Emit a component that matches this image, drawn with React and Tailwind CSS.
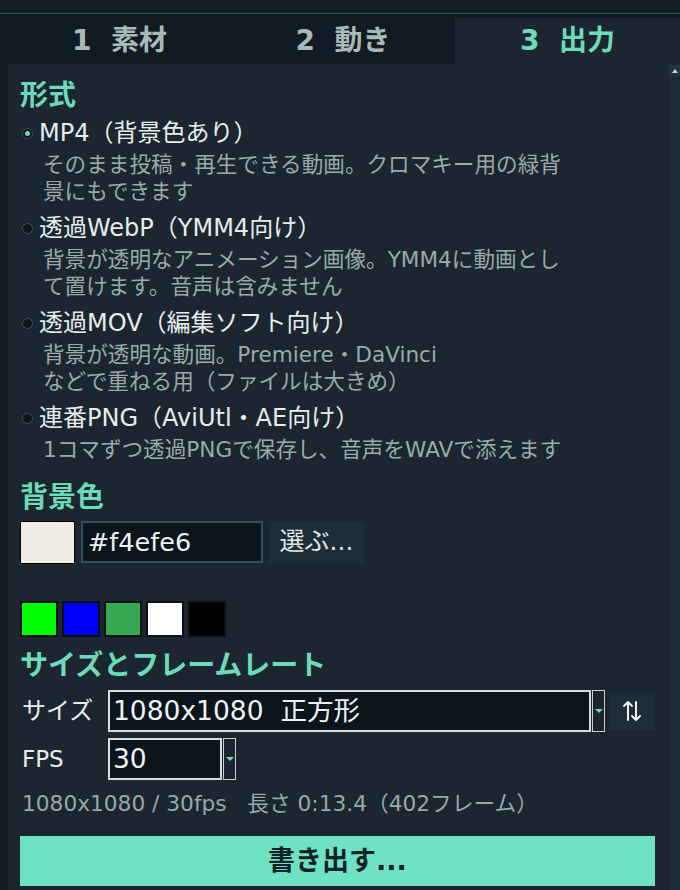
import React, { useState } from 'react';

const FONT = { fontFamily: '"DejaVu Sans", "Noto Sans CJK JP", sans-serif' };

const formats = [
  { id: 'mp4', label: 'MP4（背景色あり）', desc: ['そのまま投稿・再生できる動画。クロマキー用の緑背', '景にもできます'] },
  { id: 'webp', label: '透過WebP（YMM4向け）', desc: ['背景が透明なアニメーション画像。YMM4に動画とし', 'て置けます。音声は含みません'] },
  { id: 'mov', label: '透過MOV（編集ソフト向け）', desc: ['背景が透明な動画。Premiere・DaVinci', 'などで重ねる用（ファイルは大きめ）'] },
  { id: 'png', label: '連番PNG（AviUtl・AE向け）', desc: ['1コマずつ透過PNGで保存し、音声をWAVで添えます'] },
];

const palette = ['bg-[#00ff00]', 'bg-[#0000ff]', 'bg-[#34a853]', 'bg-[#ffffff]', 'bg-[#000000]'];

const Heading = ({ children, className = '' }) => (
  <h2 className={`text-[28px] leading-[36px] font-bold text-[#6ddbbb] ${className}`}>{children}</h2>
);

// tk風のコンボボックス（入力欄＋細い矢印ボタン）
const Combo = ({ value, width }) => (
  <div className="flex h-[42px]">
    <div className={`${width} h-full bg-[#0c141c] border-2 border-[#d5dcdc] flex items-center pl-[3px] text-[26.5px] text-[#eef3f3] whitespace-pre`}>
      {value}
    </div>
    <div className="w-[13px] h-full ml-[1px] border border-[#c8d0d0] bg-[#1b2631] flex items-center justify-center">
      <div className="w-0 h-0 border-l-[4px] border-r-[4px] border-t-[4px] border-l-transparent border-r-transparent border-t-[#6ddbbb]" />
    </div>
  </div>
);

const App = () => {
  const [tab, setTab] = useState(3);
  const [format, setFormat] = useState('mp4');
  const [bg, setBg] = useState('#f4efe6');

  const tabs = [
    { n: 1, label: '1  素材' },
    { n: 2, label: '2  動き' },
    { n: 3, label: '3  出力' },
  ];

  return (
    <div className="w-[680px] h-[890px] overflow-hidden bg-[#111b23] flex flex-col" style={FONT}>
      <div className="h-[13px] bg-[#141e27] shrink-0" />
      <div className="h-px bg-[#3b505a] shrink-0" />

      {/* タブ */}
      <div className="pt-[4px] pl-[8px] grid grid-cols-[223px_224px_225px] shrink-0">
        {tabs.map(t => (
          <button
            key={t.n}
            onClick={() => setTab(t.n)}
            className={`h-[46px] flex items-center justify-center text-[28px] font-bold whitespace-pre ${
              tab === t.n ? 'bg-[#1b2631] text-[#6ddbbb]' : 'text-[#a9b9b8]'
            }`}
          >
            {t.label}
          </button>
        ))}
      </div>

      <div className="flex flex-1 min-h-0">
        <div className="w-[8px] shrink-0" />

        {/* 出力パネル */}
        <div className="flex-1 bg-[#1b2631] pl-[12px] pr-[14px] pt-[14px] flex flex-col">
          <Heading>形式</Heading>

          <div className="mt-[4px] flex flex-col gap-[8px]">
            {formats.map(f => (
              <div key={f.id}>
                <label className="flex items-center h-[30px] cursor-pointer" onClick={() => setFormat(f.id)}>
                  <span className="ml-[2px] w-[11px] h-[11px] rounded-full bg-[#0c141c] border border-[#3c535b] flex items-center justify-center">
                    {format === f.id && <span className="w-[5px] h-[5px] rounded-full bg-[#6ddbbb]" />}
                  </span>
                  <span className="ml-[6px] text-[24px] text-[#e7eded] whitespace-nowrap">{f.label}</span>
                </label>
                <div className="mt-[3px] pl-[23px] text-[21.6px] leading-[27px] text-[#9aabaa] whitespace-nowrap">
                  {f.desc.map(line => (
                    <div key={line}>{line}</div>
                  ))}
                </div>
              </div>
            ))}
          </div>

          <Heading className="mt-[17px]">背景色</Heading>
          <div className="mt-[5px] flex items-center h-[42px]">
            <div className="w-[55px] h-[43px] border border-black" style={{ backgroundColor: '#f2ede6' }} />
            <div className="ml-[6px] w-[182px] h-[42px] bg-[#0c141c] border-2 border-[#36505a] flex items-center pl-[5px] text-[25.5px] text-[#eef3f3]">
              {bg}
            </div>
            <button className="ml-[6px] w-[95px] h-[41px] bg-[#1f2d38] text-[25px] text-[#e0e7e7] flex items-center justify-center">
              選ぶ...
            </button>
          </div>

          <div className="mt-[38px] flex gap-[4px]">
            {palette.map(c => (
              <button key={c} className={`w-[38px] h-[36px] border-2 border-[#0b0f12] ${c}`} onClick={() => setBg(bg)} />
            ))}
          </div>

          <Heading className="mt-[11px]">サイズとフレームレート</Heading>

          <div className="mt-[6px] flex items-center">
            <span className="w-[88px] pl-[2px] text-[24px] text-[#e7eded]">サイズ</span>
            <Combo value="1080x1080  正方形" width="w-[483px]" />
            <button className="ml-[4px] w-[46px] h-[37px] bg-[#1f2d38] flex items-center justify-center text-[#eef3f3]">
              <svg width="20" height="22" viewBox="0 0 20 22" fill="none" stroke="currentColor" strokeWidth="2" strokeLinecap="round" strokeLinejoin="round">
                <path d="M6 20V2M2 6l4-4 4 4" />
                <path d="M14 2v18M10 16l4 4 4-4" />
              </svg>
            </button>
          </div>

          <div className="mt-[6px] flex items-center">
            <span className="w-[88px] pl-[2px] text-[23px] text-[#e7eded]">FPS</span>
            <Combo value="30" width="w-[114px]" />
          </div>

          <div className="mt-[10px] pl-[2px] text-[21.7px] leading-[27px] text-[#98a9a8] whitespace-pre">
            1080x1080 / 30fps   長さ 0:13.4（402フレーム）
          </div>

          <button className="mt-[19px] h-[50px] w-full bg-[#6ee2c2] text-[27px] font-bold text-[#122029] flex items-center justify-center">
            書き出す...
          </button>
        </div>

        {/* スクロールバー */}
        <div className="w-[12px] bg-[#1f2c36] shrink-0 flex flex-col">
          <div className="h-[11px] mt-[1px] bg-[#243540] flex items-center justify-center">
            <div className="w-0 h-0 border-l-[3px] border-r-[3px] border-b-[4px] border-l-transparent border-r-transparent border-b-[#c8d2d2]" />
          </div>
        </div>
      </div>
    </div>
  );
};

export default App;
